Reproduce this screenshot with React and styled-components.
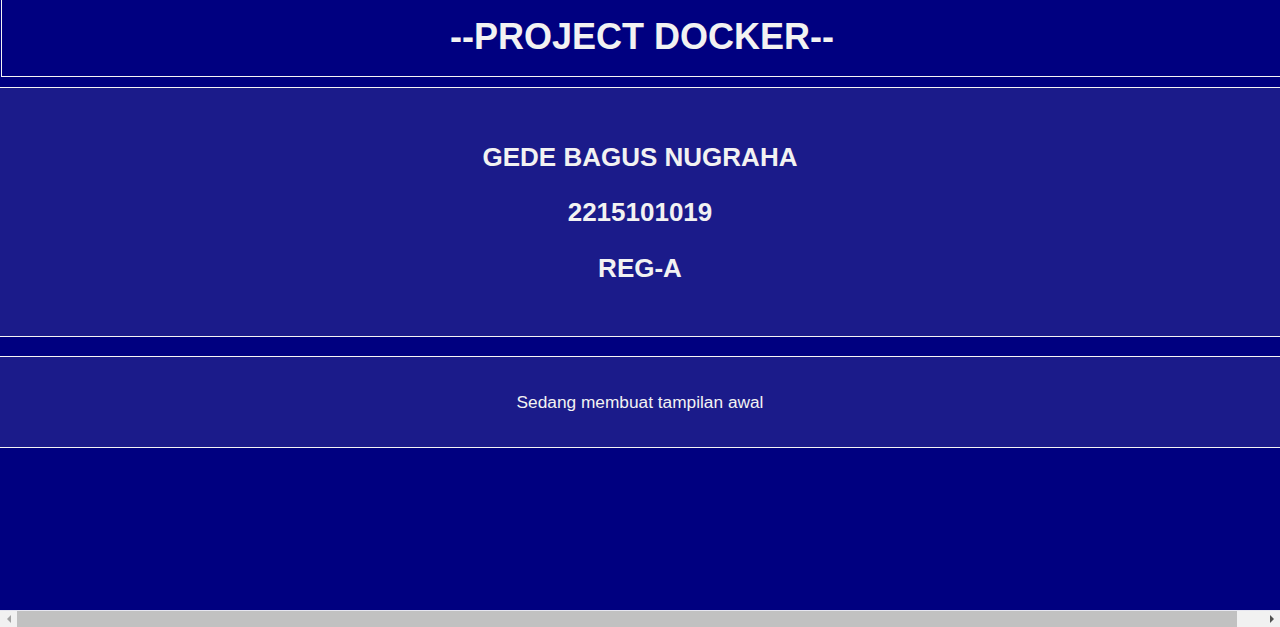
import React from 'react'
import styled, { createGlobalStyle } from 'styled-components'

const GlobalStyle = createGlobalStyle`
  html, body {
    margin: 0;
    padding: 0;
    background-color: #000080;
    font-family: "Liberation Sans", Arial, sans-serif;
    color: #f2f2f2;
    overflow: hidden;
  }
`

const Header = styled.header`
  margin-left: 1px;
  width: calc(100% + 26px);
  padding: 16px 24px 19px 0;
  box-sizing: border-box;
  border: 1px solid #f4f4f4;
  border-top: none;
  background-color: #000080;
  text-align: center;
`

const Title = styled.h1`
  margin: 0;
  font-size: 36px;
  line-height: 41px;
  font-weight: bold;
`

const Section = styled.section`
  margin-top: ${props => props.gap}px;
  height: ${props => props.height}px;
  border-top: 1px solid #f4f4f4;
  border-bottom: 1px solid #f4f4f4;
  background-color: #1b1b8a;
  display: flex;
  flex-direction: column;
  align-items: center;
  justify-content: center;
  gap: 25.5px;
`

const Identity = styled.h2`
  margin: 0;
  font-size: 26px;
  line-height: 30px;
  font-weight: bold;
`

const Note = styled.p`
  margin: 0;
  font-size: 17.3px;
  line-height: 20px;
`

// horizontal scrollbar of the window, drawn over the bottom edge
const ScrollBar = styled.div`
  position: fixed;
  left: 0;
  right: 0;
  bottom: 0;
  height: 16px;
  display: grid;
  grid-template-columns: 17px 1220px 1fr 17px;
  background-color: #f1f1f1;
  border-top: 1px solid #e6e6f0;
`

const Arrow = styled.div`
  display: flex;
  align-items: center;
  justify-content: center;
  &::before {
    content: '';
    width: 0;
    height: 0;
    border-top: 4px solid transparent;
    border-bottom: 4px solid transparent;
    ${props => props.dir === 'left'
      ? 'border-right: 4px solid #a3a3a3;'
      : 'border-left: 4px solid #505050;'}
  }
`

const Thumb = styled.div`
  background-color: #c1c1c1;
`

export default function App() {
  return (
    <>
      <GlobalStyle />
      <Header>
        <Title>--PROJECT DOCKER--</Title>
      </Header>
      <Section gap={10} height={248}>
        <Identity>GEDE BAGUS NUGRAHA</Identity>
        <Identity>2215101019</Identity>
        <Identity>REG-A</Identity>
      </Section>
      <Section gap={19} height={90}>
        <Note>Sedang membuat tampilan awal</Note>
      </Section>
      <ScrollBar>
        <Arrow dir="left" />
        <Thumb />
        <div />
        <Arrow dir="right" />
      </ScrollBar>
    </>
  )
}
